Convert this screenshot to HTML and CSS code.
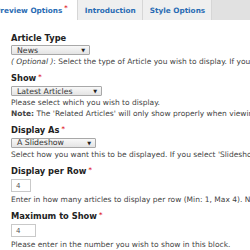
FILE: index.html
```html
<!DOCTYPE html>
<html lang="en">
<head>
    <meta charset="UTF-8">
    <title>Block Options</title>
    <link rel="stylesheet" href="styles.css">
</head>
<body>
    <div class="tabs">
        <div class="tab active">Preview Options<span class="req">*</span></div>
        <div class="tab">Introduction</div>
        <div class="tab">Style Options</div>
    </div>

    <div class="form">
        <div class="field">
            <div class="label">Article Type</div>
            <div class="select news"><span>News</span><span class="arrow">&#9660;</span></div>
            <div class="desc"><em>( Optional )</em>: Select the type of Article you wish to display. If you select none, all types will be shown.</div>
        </div>

        <div class="field">
            <div class="label">Show<span class="req">*</span></div>
            <div class="select latest"><span>Latest Articles</span><span class="arrow">&#9660;</span></div>
            <div class="desc">Please select which you wish to display.</div>
            <div class="desc"><b>Note:</b> The 'Related Articles' will only show properly when viewing an article.</div>
        </div>

        <div class="field">
            <div class="label">Display As<span class="req">*</span></div>
            <div class="select slide"><span>A Slideshow</span><span class="arrow">&#9660;</span></div>
            <div class="desc">Select how you want this to be displayed. If you select 'Slideshow' the articles will rotate.</div>
        </div>

        <div class="field">
            <div class="label">Display per Row<span class="req">*</span></div>
            <div class="input small">4</div>
            <div class="desc">Enter in how many articles to display per row (Min: 1, Max 4). Note: this only applies to lists.</div>
        </div>

        <div class="field">
            <div class="label">Maximum to Show<span class="req">*</span></div>
            <div class="input">4</div>
            <div class="desc">Please enter in the number you wish to show in this block.</div>
        </div>
    </div>
</body>
</html>
```

FILE: styles.css
```css
body {
    margin: 0;
    background: #fff;
    font-family: 'DejaVu Sans', Verdana, sans-serif;
    color: #333;
    overflow: hidden;
}

.tabs {
    display: flex;
    height: 20px;
    margin-left: -12px;
    background: #e1e1e1;
}

.tab {
    display: flex;
    align-items: center;
    padding: 0 6px 0 7px;
    background: #efefef;
    border-right: 1px solid #d6d6d6;
    color: #2a6cb4;
    font-size: 7.3px;
    font-weight: bold;
    white-space: nowrap;
}

.tab.active {
    background: #fff;
    padding-right: 9px;
}

.req {
    color: #e0282e;
    font-size: 6.5px;
    margin-left: 2px;
    position: relative;
    top: -2px;
}

.form {
    padding: 14px 11px 0;
}

.field {
    margin-bottom: 6.5px;
}

.label {
    font-size: 8.3px;
    font-weight: bold;
    color: #222;
    line-height: 9px;
    margin-bottom: 2px;
    white-space: nowrap;
}

.select {
    display: flex;
    justify-content: space-between;
    align-items: center;
    box-sizing: border-box;
    height: 10px;
    padding: 0 4px 0 5px;
    border: 1px solid #a8a8a8;
    border-radius: 1px;
    background: linear-gradient(#f8f8f8, #e4e4e4);
    font-size: 7.8px;
    color: #333;
    margin-bottom: 2px;
}

.select.news { width: 79px; }
.select.latest { width: 91px; }
.select.slide { width: 85px; }

.arrow {
    font-size: 5px;
    color: #222;
}

.input {
    box-sizing: border-box;
    width: 25px;
    height: 13px;
    padding: 2px 0 0 4px;
    border: 1px solid #c9c9c9;
    font-size: 7px;
    color: #555;
    margin-bottom: 3px;
}

.input.small {
    width: 20px;
}

.desc {
    font-size: 7.5px;
    line-height: 10.5px;
    color: #444;
    white-space: nowrap;
}
```
